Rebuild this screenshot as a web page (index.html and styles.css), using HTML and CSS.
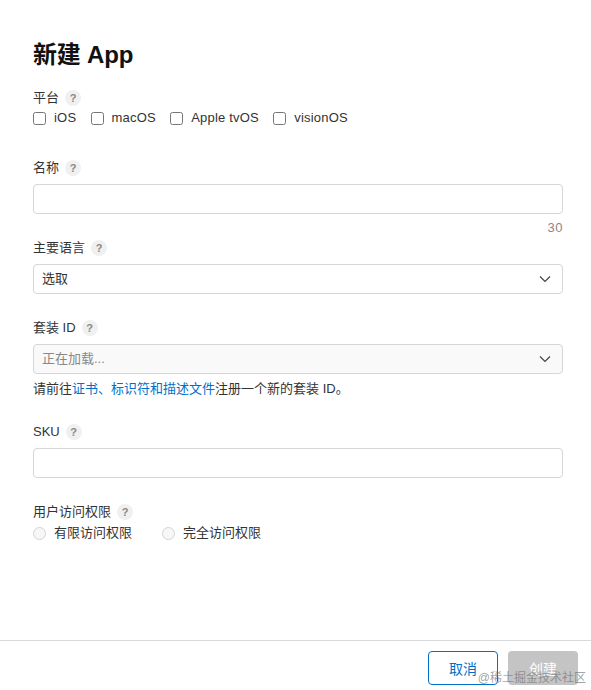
FILE: index.html
```html
<!DOCTYPE html>
<html lang="zh-CN">
<head>
    <meta charset="UTF-8">
    <title>新建 App</title>
    <link rel="stylesheet" href="styles.css">
</head>
<body>
    <div class="modal">
        <div class="modal-body">
            <h1>新建 App</h1>

            <!-- Platform -->
            <div class="field field-platform">
                <div class="label">平台 <span class="help">?</span></div>
                <div class="options">
                    <label class="option"><span class="checkbox"></span>iOS</label>
                    <label class="option"><span class="checkbox"></span>macOS</label>
                    <label class="option"><span class="checkbox"></span>Apple tvOS</label>
                    <label class="option"><span class="checkbox"></span>visionOS</label>
                </div>
            </div>

            <!-- Name -->
            <div class="field field-name">
                <div class="label">名称 <span class="help">?</span></div>
                <div class="input"></div>
                <div class="counter">30</div>
            </div>

            <!-- Primary language -->
            <div class="field field-language">
                <div class="label">主要语言 <span class="help">?</span></div>
                <div class="input select">
                    <span>选取</span>
                    <svg class="chevron" viewBox="0 0 12 8"><path d="M1 1.5l5 5 5-5"/></svg>
                </div>
            </div>

            <!-- Bundle ID -->
            <div class="field field-bundle">
                <div class="label">套装 ID <span class="help">?</span></div>
                <div class="input select loading">
                    <span>正在加载...</span>
                    <svg class="chevron" viewBox="0 0 12 8"><path d="M1 1.5l5 5 5-5"/></svg>
                </div>
                <p class="hint">请前往<a href="#">证书、标识符和描述文件</a>注册一个新的套装 ID。</p>
            </div>

            <!-- SKU -->
            <div class="field field-sku">
                <div class="label">SKU <span class="help">?</span></div>
                <div class="input"></div>
            </div>

            <!-- User access -->
            <div class="field field-access">
                <div class="label">用户访问权限 <span class="help">?</span></div>
                <div class="options radios">
                    <label class="option"><span class="radio"></span>有限访问权限</label>
                    <label class="option"><span class="radio"></span>完全访问权限</label>
                </div>
            </div>
        </div>

        <div class="modal-footer">
            <button class="btn btn-cancel">取消</button>
            <button class="btn btn-create">创建</button>
        </div>
    </div>
    <div class="watermark">@稀土掘金技术社区</div>
</body>
</html>
```

FILE: styles.css
```css
/* Base */
html, body {
    margin: 0;
    height: 100%;
}

body {
    background-color: #fff;
    color: #333;
    font-family: "Liberation Sans", "Noto Sans CJK SC", sans-serif;
    font-size: 13px;
    line-height: 20px;
    overflow: hidden;
}

.modal {
    height: 690px;
    display: flex;
    flex-direction: column;
}

.modal-body {
    flex: 1;
    padding: 39px 28px 0 33px;
}

h1 {
    margin: 0;
    height: 32px;
    font-size: 24px;
    line-height: 32px;
    font-weight: 700;
    letter-spacing: -0.2px;
    color: #111;
}

/* Fields */
.field-platform { margin-top: 17px; }
.field-name { margin-top: 30px; }
.field-language { margin-top: 0; }
.field-bundle { margin-top: 24px; }
.field-sku { margin-top: 23px; }
.field-access { margin-top: 24px; }

.label {
    height: 20px;
    display: flex;
    align-items: center;
    gap: 6px;
}

.help {
    width: 16px;
    height: 16px;
    border-radius: 50%;
    background-color: #f0f0f0;
    color: #888;
    font-size: 11px;
    font-weight: 700;
    line-height: 16px;
    text-align: center;
}

.options {
    height: 20px;
    display: flex;
    align-items: center;
    gap: 14.3px;
}

.option {
    display: flex;
    align-items: center;
    letter-spacing: 0.2px;
}

.checkbox {
    width: 11px;
    height: 11px;
    margin-right: 8px;
    border: 1px solid #767676;
    border-radius: 2.5px;
}

.radios {
    margin-top: 1px;
    gap: 30px;
}

.radios .option {
    letter-spacing: 0;
}

.radio {
    width: 11px;
    height: 11px;
    margin-right: 8px;
    border: 1px solid #d4d4d4;
    border-radius: 50%;
    background-color: #f7f7f7;
}

.input {
    box-sizing: border-box;
    height: 30px;
    margin-top: 6px;
    padding: 0 8px;
    border: 1px solid #d6d6d6;
    border-radius: 4px;
}

.select {
    display: flex;
    align-items: center;
    justify-content: space-between;
}

.loading {
    background-color: #f9f9f9;
    color: #888;
}

.chevron {
    width: 12px;
    height: 8px;
    margin-right: 3px;
    fill: none;
    stroke: #444;
    stroke-width: 1.2;
}

.counter {
    height: 20px;
    margin-top: 4px;
    text-align: right;
    color: #888;
    letter-spacing: 0.5px;
}

.hint {
    margin: 5px 0 0;
    color: #333;
}

.hint a {
    color: #0070c9;
    text-decoration: none;
}

/* Footer */
.modal-footer {
    box-sizing: border-box;
    height: 50px;
    padding: 10px 13px 0 0;
    border-top: 1px solid #d9d9d9;
    display: flex;
    justify-content: flex-end;
    gap: 10px;
}

.btn {
    box-sizing: border-box;
    width: 70px;
    height: 34px;
    border-radius: 4px;
    font-family: inherit;
    font-size: 14px;
}

.btn-cancel {
    background-color: #fff;
    border: 1px solid #0070c9;
    color: #0070c9;
}

.btn-create {
    background-color: #c4c4c4;
    border: none;
    color: #fff;
}

/* Site watermark burnt into the screenshot */
.watermark {
    position: absolute;
    right: 5px;
    bottom: 4px;
    color: rgba(110, 110, 110, 0.65);
    font-size: 12px;
    line-height: 16px;
}
```
